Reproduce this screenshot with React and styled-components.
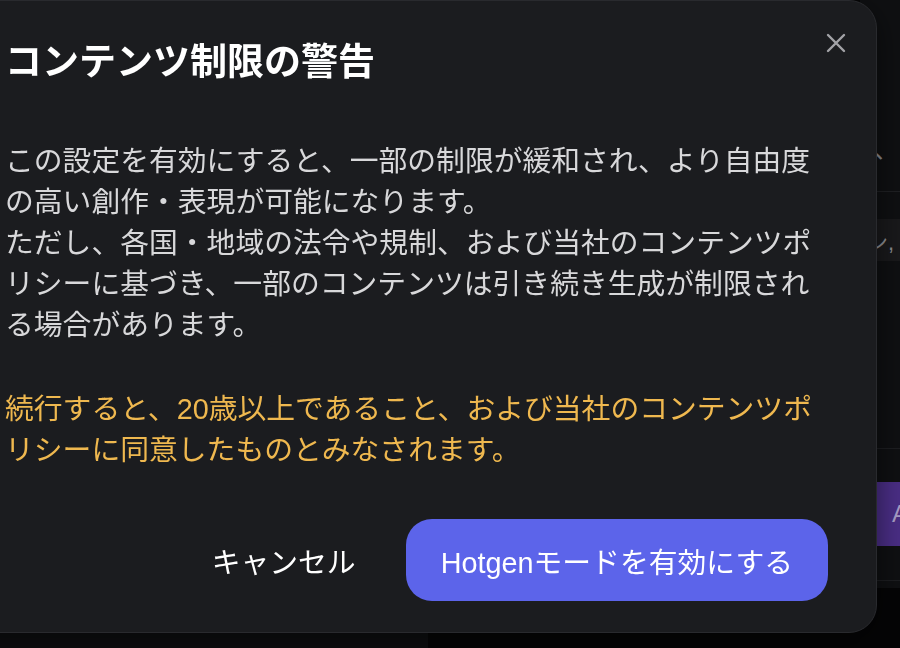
import styled, { createGlobalStyle } from 'styled-components';

const GlobalStyle = createGlobalStyle`
    html, body {
        margin: 0;
        padding: 0;
        background: #060607;
        overflow: hidden;
    }
    * {
        box-sizing: border-box;
    }
    body {
        font-family: "Liberation Sans", "Noto Sans CJK JP", "Noto Sans", sans-serif;
    }
`;

const Page = styled.div`
    display: flex;
    width: 100vw;
    height: 100vh;
`;

const Main = styled.div`
    flex: 1;
    display: flex;
    flex-direction: column;
    justify-content: flex-end;
`;

const Composer = styled.div`
    width: 428px;
    height: 56px;
    background: #0e0f11;
    border-radius: 0 16px 0 0;
`;

const Sidebar = styled.aside`
    width: 40px;
    display: flex;
    flex-direction: column;
    background: #0f1012;
    overflow: hidden;
`;

const SideHeader = styled.div`
    height: 192px;
    display: flex;
    justify-content: flex-end;
    align-items: flex-end;
    padding: 0 2px 26px 0;
    border-bottom: 1px solid #1f2023;
    color: #8a8a8e;
    font-size: 24px;
    white-space: nowrap;
`;

const SideBand = styled.div`
    margin-top: 27px;
    height: 42px;
    display: flex;
    justify-content: flex-end;
    align-items: center;
    padding-right: 6px;
    background: #19191b;
    color: #8c8c90;
    font-size: 22px;
    white-space: nowrap;
`;

const SideSpacer = styled.div`
    height: 188px;
    border-bottom: 1px solid #1d1e21;
`;

const SideButton = styled.div`
    margin-top: 33px;
    height: 64px;
    display: flex;
    align-items: center;
    padding-left: 32px;
    background: #4a2e85;
    color: #a99fc7;
    font-size: 24px;
    white-space: nowrap;
`;

const SideFooter = styled.div`
    margin-top: 34px;
    height: 8px;
    border-top: 1px solid #1d1e21;
    background: #0f1012;
`;

const SideBottom = styled.div`
    flex: 1;
    background: #050506;
`;

const Modal = styled.div`
    position: fixed;
    top: 0;
    left: -44px;
    width: 921px;
    padding: 40px 48px 31px 48px;
    background: #1b1c1f;
    border: 1px solid #292a2e;
    border-radius: 28px;
    box-shadow: 0 8px 30px rgba(0, 0, 0, 0.5);
`;

const CloseButton = styled.button`
    position: absolute;
    top: 32px;
    right: 30px;
    width: 20px;
    height: 20px;
    padding: 0;
    border: none;
    background: none;
    color: #a3a3a7;
    cursor: pointer;
    display: flex;
`;

const Title = styled.h2`
    margin: 0;
    font-size: 37px;
    line-height: 44px;
    font-weight: 700;
    color: #ffffff;
`;

const Body = styled.p`
    margin: ${(p) => p.$top}px 0 0;
    font-size: 28.8px;
    line-height: 41px;
    font-weight: 400;
    color: ${(p) => (p.$warn ? '#efb84f' : '#d8d8da')};
`;

const Actions = styled.div`
    margin-top: 48px;
    display: flex;
    justify-content: flex-end;
    align-items: center;
    gap: 26px;
`;

const Button = styled.button`
    height: 82px;
    padding: 0 ${(p) => (p.$primary ? 35 : 24)}px;
    border: none;
    border-radius: 26px;
    background: ${(p) => (p.$primary ? '#5c64ea' : 'transparent')};
    color: #ffffff;
    font-family: inherit;
    font-size: 28.8px;
    font-weight: 400;
    cursor: pointer;
`;

const CloseIcon = () => (
    <svg width="20" height="20" viewBox="0 0 20 20" fill="none" stroke="currentColor" strokeWidth="2.4" strokeLinecap="round">
        <path d="M2 2L18 18M18 2L2 18" />
    </svg>
);

const App = () => {
    return (
        <>
            <GlobalStyle />
            <Page>
                <Main>
                    <Composer />
                </Main>
                <Sidebar>
                    <SideHeader>、</SideHeader>
                    <SideBand>ン,</SideBand>
                    <SideSpacer />
                    <SideButton>A</SideButton>
                    <SideFooter />
                    <SideBottom />
                </Sidebar>
            </Page>
            <Modal role="dialog">
                <CloseButton aria-label="閉じる">
                    <CloseIcon />
                </CloseButton>
                <Title>コンテンツ制限の警告</Title>
                <Body $top={56}>
                    この設定を有効にすると、一部の制限が緩和され、より自由度の高い創作・表現が可能になります。
                    <br />
                    ただし、各国・地域の法令や規制、および当社のコンテンツポリシーに基づき、一部のコンテンツは引き続き生成が制限される場合があります。
                </Body>
                <Body $top={43} $warn>
                    続行すると、20歳以上であること、および当社のコンテンツポリシーに同意したものとみなされます。
                </Body>
                <Actions>
                    <Button>キャンセル</Button>
                    <Button $primary>Hotgenモードを有効にする</Button>
                </Actions>
            </Modal>
        </>
    );
};

export default App;
